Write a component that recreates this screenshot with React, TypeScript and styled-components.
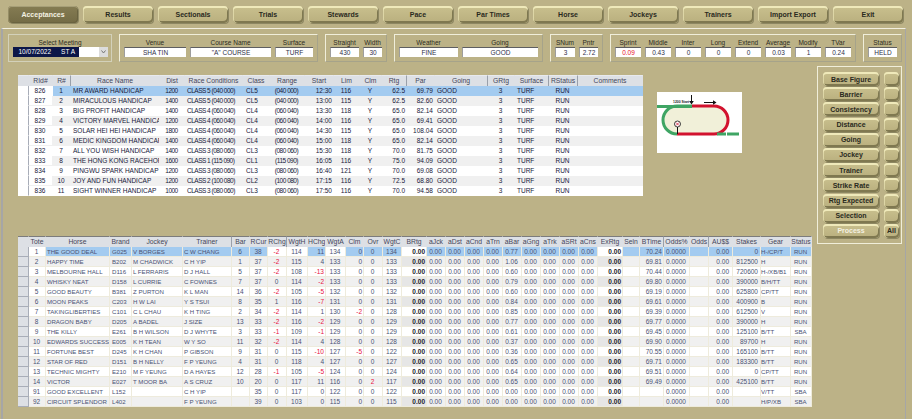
import React from 'react';
import styled, {createGlobalStyle} from 'styled-components';

const GlobalStyle = createGlobalStyle`
  html, body {
    margin: 0;
    padding: 0;
    background: #bcb287;
  }
`

const SANS = `"Liberation Sans", Arial, sans-serif`

const menu = ['Acceptances', 'Results', 'Sectionals', 'Trials', 'Stewards', 'Pace', 'Par Times', 'Horse', 'Jockeys', 'Trainers', 'Import Export', 'Exit']
const factors = ['Base Figure', 'Barrier', 'Consistency', 'Distance', 'Going', 'Jockey', 'Trainer', 'Strike Rate', 'Rtg Expected', 'Selection', 'Process']

type Align = 'left' | 'center' | 'right'
interface Column {
    label: string
    w: number
    align: Align
    pad?: number
    sep?: boolean
    bold?: boolean
    shade?: boolean
    white?: boolean
    signed?: boolean
    small?: boolean
    tight?: boolean
}

const raceColumns: Column[] = [
    {label: 'RId#', w: 24, align: 'center', white: true},
    {label: 'R#', w: 18, align: 'center', sep: true},
    {label: 'Race Name', w: 89, align: 'left', pad: 2},
    {label: 'Dist', w: 25, align: 'center', tight: true},
    {label: 'Race Conditions', w: 58, align: 'left', pad: 2, tight: true},
    {label: 'Class', w: 27, align: 'left', pad: 3},
    {label: 'Range', w: 35, align: 'center', tight: true},
    {label: 'Start', w: 29, align: 'right'},
    {label: 'Lim', w: 26, align: 'center'},
    {label: 'Clm', w: 22, align: 'center'},
    {label: 'Rtg', w: 25, align: 'right', sep: true},
    {label: 'Par', w: 28, align: 'right'},
    {label: 'Going', w: 53, align: 'left', pad: 2, sep: true},
    {label: 'GRtg', w: 27, align: 'center'},
    {label: 'Surface', w: 34, align: 'left', pad: 2, sep: true},
    {label: 'RStatus', w: 29, align: 'center', sep: true},
    {label: 'Comments', w: 65, align: 'center'},
]

const races = [
    ['826', '1', 'MR AWARD HANDICAP', '1200', 'CLASS 5 (040 000)', 'CL5', '(040 000)', '12:30', '116', 'Y', '62.5', '69.79', 'GOOD', '3', 'TURF', 'RUN', ''],
    ['827', '2', 'MIRACULOUS HANDICAP', '1400', 'CLASS 5 (040 000)', 'CL5', '(040 000)', '13:00', '115', 'Y', '62.5', '82.60', 'GOOD', '3', 'TURF', 'RUN', ''],
    ['828', '3', 'BIG PROFIT HANDICAP', '1400', 'CLASS 4 (060 040)', 'CL4', '(060 040)', '13:30', '118', 'Y', '65.0', '82.14', 'GOOD', '3', 'TURF', 'RUN', ''],
    ['829', '4', 'VICTORY MARVEL HANDICAP', '1200', 'CLASS 4 (060 040)', 'CL4', '(060 040)', '14:00', '116', 'Y', '65.0', '69.41', 'GOOD', '3', 'TURF', 'RUN', ''],
    ['830', '5', 'SOLAR HEI HEI HANDICAP', '1800', 'CLASS 4 (060 040)', 'CL4', '(060 040)', '14:30', '115', 'Y', '65.0', '108.04', 'GOOD', '3', 'TURF', 'RUN', ''],
    ['831', '6', 'MEDIC KINGDOM HANDICAP', '1400', 'CLASS 4 (060 040)', 'CL4', '(060 040)', '15:00', '118', 'Y', '65.0', '82.14', 'GOOD', '3', 'TURF', 'RUN', ''],
    ['832', '7', 'ALL YOU WISH HANDICAP', '1400', 'CLASS 3 (080 060)', 'CL3', '(080 060)', '15:30', '118', 'Y', '70.0', '81.75', 'GOOD', '3', 'TURF', 'RUN', ''],
    ['833', '8', 'THE HONG KONG RACEHORSE', '1600', 'CLASS 1 (115 090)', 'CL1', '(115 090)', '16:05', '116', 'Y', '75.0', '94.09', 'GOOD', '3', 'TURF', 'RUN', ''],
    ['834', '9', 'PINGWU SPARK HANDICAP', '1200', 'CLASS 3 (080 060)', 'CL3', '(080 060)', '16:40', '121', 'Y', '70.0', '69.08', 'GOOD', '3', 'TURF', 'RUN', ''],
    ['835', '10', 'JOY AND FUN HANDICAP', '1200', 'CLASS 2 (100 080)', 'CL2', '(100 080)', '17:15', '116', 'Y', '72.5', '68.80', 'GOOD', '3', 'TURF', 'RUN', ''],
    ['836', '11', 'SIGHT WINNER HANDICAP', '1000', 'CLASS 3 (080 060)', 'CL3', '(080 060)', '17:50', '116', 'Y', '70.0', '94.58', 'GOOD', '3', 'TURF', 'RUN', ''],
]

const runnerColumns: Column[] = [
    {label: 'Tote', w: 17, align: 'center', white: true},
    {label: 'Horse', w: 64, align: 'left', pad: 1, small: true},
    {label: 'Brand', w: 22, align: 'left', pad: 2, small: true},
    {label: 'Jockey', w: 51, align: 'left', pad: 1, small: true},
    {label: 'Trainer', w: 49, align: 'left', pad: 1, sep: true, small: true},
    {label: 'Bar', w: 18, align: 'center'},
    {label: 'RCur', w: 18, align: 'center'},
    {label: 'RChg', w: 19, align: 'center', sep: true, white: true, signed: true},
    {label: 'WgtH', w: 21, align: 'center', white: true},
    {label: 'HChg', w: 18, align: 'right', signed: true},
    {label: 'WgtA', w: 20, align: 'center', white: true},
    {label: 'Clm', w: 18, align: 'right', signed: true},
    {label: 'Ovr', w: 19, align: 'center', signed: true},
    {label: 'WgtC', w: 19, align: 'center'},
    {label: 'BRtg', w: 25, align: 'right', bold: true, shade: true, white: true},
    ...['aJck', 'aDst', 'aCnd', 'aTrn', 'aBar', 'aGng', 'aTrk', 'aSRt', 'aCns'].map((label): Column => ({label, w: 19, align: 'center'})),
    {label: 'ExRtg', w: 25, align: 'right', bold: true, shade: true, white: true},
    {label: 'Seln', w: 17, align: 'center'},
    {label: 'BTime', w: 24, align: 'right', sep: true},
    {label: 'Odds%', w: 26, align: 'center'},
    {label: 'Odds', w: 19, align: 'center', sep: true},
    {label: 'AU$$', w: 24, align: 'right', pad: 3},
    {label: 'Stakes', w: 28, align: 'right', pad: 2},
    {label: 'Gear', w: 30, align: 'left', pad: 0, small: true},
    {label: 'Status', w: 21, align: 'center', small: true},
]

const horses = [
    ['1', 'THE GOOD DEAL', 'G025', 'V BORGES', 'C W CHANG', '6', '38', '-2', '114', '11', '134', '0', '0', '134', '0.77', '70.24', '0', 'H-/CP/T'],
    ['2', 'HAPPY TIME', 'B202', 'M CHADWICK', 'C H YIP', '1', '37', '-2', '115', '4', '133', '0', '0', '133', '1.06', '69.81', '812500', 'H'],
    ['3', 'MELBOURNE HALL', 'D116', 'L FERRARIS', 'D J HALL', '5', '37', '-2', '108', '-13', '133', '0', '0', '133', '0.60', '70.44', '720600', 'H-/XB/B1'],
    ['4', 'WHISKY NEAT', 'D158', 'L CURRIE', 'C FOWNES', '7', '37', '0', '114', '-2', '133', '0', '0', '133', '0.79', '69.80', '390000', 'B/H/TT'],
    ['5', 'GOOD BEAUTY', 'B381', 'Z PURTON', 'K L MAN', '14', '36', '-2', '105', '-5', '132', '0', '0', '132', '0.60', '69.19', '625800', 'CP/TT'],
    ['6', 'MOON PEAKS', 'C203', 'H W LAI', 'Y S TSUI', '8', '35', '1', '116', '-7', '131', '0', '0', '131', '0.84', '69.61', '400900', 'B'],
    ['7', 'TAKINGLIBERTIES', 'C101', 'C L CHAU', 'K H TING', '2', '34', '-2', '114', '1', '130', '-2', '0', '128', '0.85', '69.39', '612500', 'V'],
    ['8', 'DRAGON BABY', 'D205', 'A BADEL', 'J SIZE', '13', '33', '-2', '116', '-2', '129', '0', '0', '129', '0.77', '69.77', '390000', 'H'],
    ['9', 'THE KILLY', 'E261', 'B H WILSON', 'D J WHYTE', '3', '33', '-1', '109', '-1', '129', '0', '0', '129', '0.61', '69.45', '125100', 'B/TT'],
    ['10', 'EDWARDS SUCCESS', 'E005', 'K H TEAN', 'W Y SO', '11', '32', '-2', '114', '4', '128', '0', '0', '128', '0.37', '69.90', '89700', 'H'],
    ['11', 'FORTUNE BEST', 'D245', 'K H CHAN', 'P GIBSON', '9', '31', '0', '115', '-10', '127', '-5', '0', '122', '0.36', '70.55', '165100', 'B/TT'],
    ['12', 'STAR OF RED', 'D151', 'B H NELLY', 'F P YEUNG', '4', '31', '0', '118', '4', '127', '0', '0', '127', '0.65', '69.71', '183300', 'B/TT'],
    ['13', 'TECHNIC MIGHTY', 'E210', 'M F YEUNG', 'D A HAYES', '12', '28', '-1', '105', '-5', '124', '0', '0', '124', '0.64', '69.51', '0', 'CP/TT'],
    ['14', 'VICTOR', 'E027', 'T MOOR BA', 'A S CRUZ', '10', '20', '0', '117', '11', '116', '0', '2', '117', '0.65', '69.49', '425100', 'B/TT'],
    ['91', 'GOOD EXCELLENT', 'L152', '', 'C H YIP', '', '35', '0', '117', '0', '122', '0', '0', '122', '0.00', '', '', 'V/TT'],
    ['92', 'CIRCUIT SPLENDOR', 'L402', '', 'F P YEUNG', '', '39', '0', '103', '0', '115', '0', '0', '115', '0.00', '', '', 'H/P/XB'],
]

const runnerCells = (h: string[]) => [
    ...h.slice(0, 14),
    '0.00',
    '0.00', '0.00', '0.00', '0.00', h[14], '0.00', '0.00', '0.00', '0.00',
    '0.00',
    '',
    h[15],
    '0.0000',
    '',
    '0.00',
    h[16],
    h[17],
    h[0].startsWith('9') ? 'SBA' : 'RUN',
]

const Page = styled.div`
  width: 912px;
  height: 419px;
  overflow: hidden;
  background: #bcb287;
  font-family: ${SANS};
  color: #27284a;
`

const Toolbar = styled.div`
  display: flex;
  gap: 5px;
  height: 28px;
  padding: 6px 0 0 8px;
  box-sizing: border-box;
`

const Button = styled.div<{ $active?: boolean; $w: number; $h: number; $light?: boolean }>`
  width: ${p => p.$w}px;
  height: ${p => p.$h}px;
  flex: none;
  box-sizing: border-box;
  display: flex;
  align-items: center;
  justify-content: center;
  border-radius: 4px;
  font-weight: bold;
  font-size: 7px;
  white-space: nowrap;
  color: ${p => (p.$active || p.$light) ? '#f4f1e2' : '#2a2a1e'};
  background: ${p => p.$active
    ? 'linear-gradient(#857c53, #736b45)'
    : 'linear-gradient(#c9c08e, #b9af7e)'};
  box-shadow: ${p => p.$active
    ? 'inset 0 1px 0 #a79f78, inset 1px 0 0 #958d66, inset -1px -1px 0 #6a6340, 1px 1px 0 #8d8762'
    : 'inset 0 2px 0 #efe9ba, inset 1px 0 0 #ddd6a6, inset -1px -2px 0 #7f7850, 1px 1px 0 #8d8762'};
`

const Panel = styled.div`
  width: 905px;
  height: 391px;
  margin-left: 1px;
  box-sizing: border-box;
  border-left: 2px solid #a6a6a6;
  border-right: 1px solid #a6a6a6;
  border-top: 1px solid #f2efdf;
`

const MeetingBar = styled.div`
  display: flex;
  gap: 7px;
  padding: 5px 0 0 5px;
`

const Group = styled.div<{ $dim?: boolean }>`
  height: 28px;
  flex: none;
  box-sizing: border-box;
  display: flex;
  gap: 4px;
  padding: 3px 4px 0;
  border-style: solid;
  border-width: 1px;
  border-color: ${p => p.$dim
    ? '#d3d1ba'
    : '#f0eeda #a6a38a #a6a38a #f0eeda'};
`

const Field = styled.div<{ $w: number }>`
  width: ${p => p.$w}px;
  display: flex;
  flex-direction: column;
  align-items: center;
`

const FieldLabel = styled.div`
  height: 9px;
  line-height: 9px;
  font-size: 6.5px;
  color: #2c2c1e;
  white-space: nowrap;
`

const FieldValue = styled.div<{ $alert?: boolean }>`
  width: 100%;
  height: 10px;
  box-sizing: border-box;
  line-height: 9px;
  text-align: center;
  font-size: 6.5px;
  background: #fff;
  border-top: 1px solid #5e5e60;
  border-left: 1px solid #9d9d9d;
  color: ${p => p.$alert ? '#e80f1f' : '#2f3048'};
`

const MeetingSelect = styled.div`
  display: flex;
  width: 95px;
  height: 10px;
  background: #fff;
`

const MeetingText = styled.div`
  width: 66px;
  flex: none;
  box-sizing: border-box;
  display: flex;
  gap: 10px;
  padding-left: 6px;
  line-height: 10px;
  font-size: 6.5px;
  color: #fff;
  background: #0c1648;
  white-space: nowrap;
`

const SelectArrow = styled.div`
  width: 9px;
  margin-left: auto;
  background: #dcdcdc;
  display: flex;
  align-items: center;
  justify-content: center;
`

const Body = styled.div`
  display: flex;
  align-items: flex-start;
`

const LeftColumn = styled.div`
  width: 796px;
  flex: none;
  padding: 13px 0 0 15px;
`

const RaceRow = styled.div`
  display: flex;
  align-items: flex-start;
  height: 161px;
`

const GridTable = styled.table<{ $w: number; $frame?: boolean }>`
  width: ${p => p.$w}px;
  flex: none;
  table-layout: fixed;
  border-collapse: separate;
  border-spacing: 0;
  background: #fff;
  box-shadow: ${p => p.$frame ? 'inset 0 1px 0 #777, inset 1px 0 0 #8b8b8b' : 'none'};
`

const Col = styled.col<{ $w: number }>`
  width: ${p => p.$w}px;
`

const HeadCell = styled.th<{ $sep?: boolean; $top?: boolean }>`
  height: 11px;
  padding: 0;
  box-sizing: border-box;
  font-weight: normal;
  font-size: 6.8px;
  line-height: 10px;
  text-align: center;
  white-space: nowrap;
  overflow: hidden;
  color: #45465a;
  background: #dde0e5;
  border-top: 1px solid ${p => p.$top ? '#7c7c7c' : '#e8eaee'};
  border-right: 1px solid ${p => p.$sep ? '#9aa0aa' : '#dde0e5'};
`

const Selector = styled.td<{ $tinted?: boolean }>`
  height: 10px;
  padding: 0;
  box-sizing: border-box;
  background: ${p => p.$tinted ? '#dde0e5' : '#fff'};
  border-bottom: 1px solid ${p => p.$tinted ? '#a8adb8' : '#fff'};
  border-right: 1px solid #a8adb8;
`

const fills = {
  plain: '#fff',
  even: '#f0f0f0',
  shade: '#e6e6e6',
  selected: '#a3cbf0',
}

const Cell = styled.td<{
  $align: Align
  $pad?: number
  $fill: keyof typeof fills
  $color?: string
  $bold?: boolean
  $small?: boolean
  $tight?: boolean
  $line: string
}>`
  height: 10px;
  padding: 0 ${p => p.$align === 'left' ? 0 : (p.$pad ?? 1)}px 0 ${p => p.$align === 'left' ? (p.$pad ?? 1) : 0}px;
  box-sizing: border-box;
  font-size: ${p => p.$small ? '6.1px' : '6.5px'};
  letter-spacing: ${p => p.$tight ? '-0.5px' : 'normal'};
  line-height: 9px;
  white-space: nowrap;
  overflow: hidden;
  text-align: ${p => p.$align};
  font-weight: ${p => p.$bold ? 'bold' : 'normal'};
  color: ${p => p.$color ?? 'inherit'};
  background: ${p => fills[p.$fill]};
  border-bottom: 1px solid ${p => p.$line};
  border-right: 1px solid ${p => p.$line};
`

const RaceBody = styled.tbody`
  color: #17183a;
`

const RunnerBody = styled.tbody`
  color: #4a5274;
`

const TrackMap = styled.div`
  width: 85px;
  height: 61px;
  flex: none;
  margin: 17px 0 0 14px;
  background: #fff;
`

const FactorPanel = styled.div`
  width: 85px;
  height: 178px;
  flex: none;
  margin: 4px 0 0 3px;
  padding: 5px 3px 0 5px;
  box-sizing: border-box;
  border: 1px solid #f0eeda;
  display: grid;
  grid-template-columns: 56px 15px;
  grid-auto-rows: 14.2px;
  column-gap: 5px;
  row-gap: 1px;
`

const MapLabel = styled.text`
  font-family: ${SANS};
  font-size: 3.4px;
  font-weight: bold;
  fill: #222;
`

const Track: React.FC = () => (
    <svg width="85" height="61" viewBox="0 0 85 61">
        <path d="M20 42 H57 A14 14 0 0 0 57 14 H20 A14 14 0 0 0 20 42 Z" fill="#f1f0d9"/>
        <path d="M0 14.5 H35" stroke="#3fa564" strokeWidth="3" fill="none"/>
        <path d="M20 42 A14 14 0 0 1 20 14 H35" stroke="#3fa564" strokeWidth="3" fill="none"/>
        <path d="M35 14 H57 A14 14 0 0 1 57 42 H20" stroke="#d2122e" strokeWidth="3" fill="none"/>
        <path d="M60 42 H83" stroke="#3fa564" strokeWidth="3" strokeDasharray="9 1 12 1" fill="none"/>
        <path d="M34.500 3 V11" stroke="#111" strokeWidth="1" fill="none"/>
        <path d="M32.200 9 L34.500 12.500 L36.800 9 Z" fill="#111"/>
        <path d="M47 10.500 H57" stroke="#111" strokeWidth="1" fill="none"/>
        <path d="M56 8.200 L59.500 10.500 L56 12.800 Z" fill="#111"/>
        <MapLabel x="16" y="11">1200 Start</MapLabel>
        <path d="M20.500 33 V42" stroke="#111" strokeWidth="1" fill="none"/>
        <circle cx="20.500" cy="32" r="3" fill="#fff" stroke="#111" strokeWidth="0.800"/>
        <path d="M19 30.500 L22 33.500 M22 30.500 L19 33.500" stroke="#d2122e" strokeWidth="0.800" fill="none"/>
    </svg>
)

const isRed = (c: Column, v: string) => !!c.signed && (v.startsWith('-') || (c.label === 'Ovr' && v !== '0'))

const App: React.FC = () => {
    return (
        <Page>
            <GlobalStyle/>
            <Toolbar>
                {menu.map((m, i) => <Button key={m} $w={70} $h={17} $active={i === 0}>{m}</Button>)}
            </Toolbar>
            <Panel>
                <MeetingBar>
                    <Group $dim>
                        <Field $w={94}>
                            <FieldLabel>Select Meeting</FieldLabel>
                            <MeetingSelect>
                                <MeetingText><span>10/07/2022</span><span>ST A</span></MeetingText>
                                <SelectArrow>
                                    <svg width="5" height="4" viewBox="0 0 5 4">
                                        <path d="M0.500 0.500 L2.500 3 L4.500 0.500" stroke="#777" fill="none"/>
                                    </svg>
                                </SelectArrow>
                            </MeetingSelect>
                        </Field>
                    </Group>
                    <Group>
                        <Field $w={62}><FieldLabel>Venue</FieldLabel><FieldValue>SHA TIN</FieldValue></Field>
                        <Field $w={81}><FieldLabel>Course Name</FieldLabel><FieldValue>"A" COURSE</FieldValue></Field>
                        <Field $w={38}><FieldLabel>Surface</FieldLabel><FieldValue>TURF</FieldValue></Field>
                    </Group>
                    <Group>
                        <Field $w={29}><FieldLabel>Straight</FieldLabel><FieldValue>430</FieldValue></Field>
                        <Field $w={19}><FieldLabel>Width</FieldLabel><FieldValue>30</FieldValue></Field>
                    </Group>
                    <Group>
                        <Field $w={59}><FieldLabel>Weather</FieldLabel><FieldValue>FINE</FieldValue></Field>
                        <Field $w={76}><FieldLabel>Going</FieldLabel><FieldValue>GOOD</FieldValue></Field>
                    </Group>
                    <Group>
                        <Field $w={20}><FieldLabel>SNum</FieldLabel><FieldValue>3</FieldValue></Field>
                        <Field $w={19}><FieldLabel>Pntr</FieldLabel><FieldValue>2.72</FieldValue></Field>
                    </Group>
                    <Group>
                        <Field $w={26}><FieldLabel>Sprint</FieldLabel><FieldValue $alert>0.09</FieldValue></Field>
                        <Field $w={26}><FieldLabel>Middle</FieldLabel><FieldValue>0.43</FieldValue></Field>
                        <Field $w={26}><FieldLabel>Inter</FieldLabel><FieldValue>0</FieldValue></Field>
                        <Field $w={26}><FieldLabel>Long</FieldLabel><FieldValue>0</FieldValue></Field>
                        <Field $w={26}><FieldLabel>Extend</FieldLabel><FieldValue>0</FieldValue></Field>
                        <Field $w={26}><FieldLabel>Average</FieldLabel><FieldValue>0.03</FieldValue></Field>
                        <Field $w={26}><FieldLabel>Modify</FieldLabel><FieldValue>1</FieldValue></Field>
                        <Field $w={26}><FieldLabel>TVar</FieldLabel><FieldValue>0.24</FieldValue></Field>
                    </Group>
                    <Group>
                        <Field $w={29}><FieldLabel>Status</FieldLabel><FieldValue>HELD</FieldValue></Field>
                    </Group>
                </MeetingBar>
                <Body>
                    <LeftColumn>
                        <RaceRow>
                            <GridTable $w={625}>
                                <colgroup>
                                    <Col $w={11}/>
                                    {raceColumns.map(c => <Col key={c.label} $w={c.w}/>)}
                                </colgroup>
                                <thead>
                                    <tr>
                                        <HeadCell/>
                                        {raceColumns.map(c => <HeadCell key={c.label} $sep={c.sep}>{c.label}</HeadCell>)}
                                    </tr>
                                </thead>
                                <RaceBody>
                                    {races.map((r, i) => (
                                        <tr key={r[0]}>
                                            <Selector/>
                                            {raceColumns.map((c, j) => (
                                                <Cell
                                                    key={c.label}
                                                    $align={c.align}
                                                    $pad={c.pad}
                                                    $tight={c.tight}
                                                    $line={i === 0 && !c.white ? '#a3cbf0' : i % 2 ? '#f0f0f0' : '#fff'}
                                                    $fill={c.white ? 'plain' : i === 0 ? 'selected' : i % 2 ? 'even' : 'plain'}
                                                >
                                                    {r[j]}
                                                </Cell>
                                            ))}
                                        </tr>
                                    ))}
                                </RaceBody>
                            </GridTable>
                            <TrackMap><Track/></TrackMap>
                        </RaceRow>
                        <GridTable $w={794} $frame>
                            <colgroup>
                                <Col $w={11}/>
                                {runnerColumns.map(c => <Col key={c.label} $w={c.w}/>)}
                            </colgroup>
                            <thead>
                                <tr>
                                    <HeadCell $top/>
                                    {runnerColumns.map(c => <HeadCell key={c.label} $top $sep={c.sep}>{c.label}</HeadCell>)}
                                </tr>
                            </thead>
                            <RunnerBody>
                                {horses.map((h, i) => {
                                    const cells = runnerCells(h)
                                    return (
                                        <tr key={h[0]}>
                                            <Selector $tinted/>
                                            {runnerColumns.map((c, j) => {
                                                const fill = i === 0
                                                    ? (c.white ? 'plain' : 'selected')
                                                    : c.shade && i % 2 ? 'shade' : i % 2 ? 'even' : 'plain'
                                                return (
                                                    <Cell
                                                        key={c.label}
                                                        $align={c.align}
                                                        $pad={c.pad}
                                                        $bold={c.bold}
                                                        $small={c.small}
                                                        $line="#eeebdc"
                                                        $fill={fill}
                                                        $color={isRed(c, cells[j]) ? '#e8103c' : c.bold ? '#1a1a2a' : undefined}
                                                    >
                                                        {cells[j]}
                                                    </Cell>
                                                )
                                            })}
                                        </tr>
                                    )
                                })}
                            </RunnerBody>
                        </GridTable>
                    </LeftColumn>
                    <FactorPanel>
                        {factors.map((f, i) => (
                            <React.Fragment key={f}>
                                <Button $w={56} $h={14} $light={f === 'Process'}>{f}</Button>
                                <Button $w={15} $h={14}>{i === factors.length - 1 ? 'All' : ''}</Button>
                            </React.Fragment>
                        ))}
                    </FactorPanel>
                </Body>
            </Panel>
        </Page>
    );
};

export default App;
